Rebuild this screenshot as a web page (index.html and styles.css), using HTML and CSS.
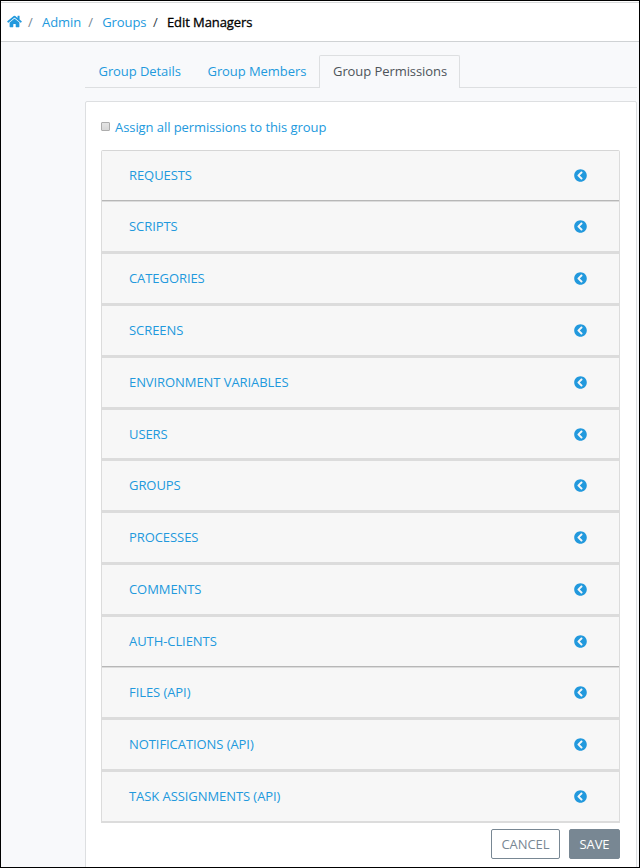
FILE: index.html
```html
<!DOCTYPE html>
<html lang="en">
<head>
<meta charset="utf-8">
<title>Edit Managers</title>
<link rel="stylesheet" href="styles.css">
</head>
<body>
<svg width="0" height="0" class="defs">
  <symbol id="chevron" viewBox="0 0 512 512"><path d="M256 504C119 504 8 393 8 256S119 8 256 8s248 111 248 248-111 248-248 248zM142 273l136 136c9 9 25 9 34 0l18-18c9-9 9-25 0-34L227 256l102-101c9-9 9-25 0-34l-18-18c-9-9-25-9-34 0L142 239c-10 9-10 25 0 34z"/></symbol>
</svg>
<div class="frame">
  <nav class="breadcrumb">
    <svg class="home" viewBox="0 0 576 512"><path d="M280 148L96 300v164a16 16 0 0 0 16 16h112a16 16 0 0 0 16-16v-96a16 16 0 0 1 16-16h64a16 16 0 0 1 16 16v96a16 16 0 0 0 16 16h112a16 16 0 0 0 16-16V300L296 148a12 12 0 0 0-16 0zm292 103l-84-69V44a12 12 0 0 0-12-12h-56a12 12 0 0 0-12 12v72l-90-74a48 48 0 0 0-61 0L4 251a12 12 0 0 0-1 17l25 31a12 12 0 0 0 17 2L280 107a12 12 0 0 1 16 0l235 194a12 12 0 0 0 17-2l25-31a12 12 0 0 0-1-17z"/></svg>
    <span class="sep first">/</span><a class="admin">Admin</a>
    <span class="sep second">/</span><a class="groups">Groups</a>
    <span class="sep third">/</span><strong>Edit Managers</strong>
  </nav>
  <main>
    <div class="tabs">
      <a class="tab details">Group Details</a>
      <a class="tab members">Group Members</a>
      <a class="tab active">Group Permissions</a>
    </div>
    <section class="card">
      <label class="assign"><span class="box"></span>Assign all permissions to this group</label>
      <div class="accordion">
        <div class="row tight dark"><span>REQUESTS</span><svg><use href="#chevron"/></svg></div>
        <div class="row"><span>SCRIPTS</span><svg><use href="#chevron"/></svg></div>
        <div class="row"><span>CATEGORIES</span><svg><use href="#chevron"/></svg></div>
        <div class="row"><span>SCREENS</span><svg><use href="#chevron"/></svg></div>
        <div class="row"><span>ENVIRONMENT VARIABLES</span><svg><use href="#chevron"/></svg></div>
        <div class="row short"><span>USERS</span><svg><use href="#chevron"/></svg></div>
        <div class="row"><span>GROUPS</span><svg><use href="#chevron"/></svg></div>
        <div class="row"><span>PROCESSES</span><svg><use href="#chevron"/></svg></div>
        <div class="row"><span>COMMENTS</span><svg><use href="#chevron"/></svg></div>
        <div class="row tight dark"><span>AUTH-CLIENTS</span><svg><use href="#chevron"/></svg></div>
        <div class="row"><span>FILES (API)</span><svg><use href="#chevron"/></svg></div>
        <div class="row"><span>NOTIFICATIONS (API)</span><svg><use href="#chevron"/></svg></div>
        <div class="row tight"><span>TASK ASSIGNMENTS (API)</span><svg><use href="#chevron"/></svg></div>
      </div>
      <div class="actions"><button class="cancel">CANCEL</button><button class="save">SAVE</button></div>
    </section>
  </main>
</div>
</body>
</html>
```
FILE: styles.css
```css
* { box-sizing: border-box; }
body { margin: 0; font: 13px/20px "Open Sans", sans-serif; letter-spacing: -.07px; color: #2299dd; }
.defs { display: block; }
svg { fill: #2299dd; flex: none; }
.frame { width: 640px; height: 868px; border: 1px solid #000; background: #f8f9fb; overflow: hidden; }

.breadcrumb { display: flex; align-items: center; height: 41px; padding: 1px 0 0 6px; margin: 0; background: #fff; border-bottom: 1px solid #cfd2d4; box-shadow: inset 0 1px #fff, inset 0 2px #d9dbdc; }
.home { width: 15px; height: 13px; }
.sep { color: #788793; }
.first { width: 14px; margin-left: 6px; }
.second { width: 14px; margin-left: 7px; }
.third { width: 14px; margin-left: 6.5px; color: #333d48; }
.breadcrumb strong { font-weight: 400; color: #000; -webkit-text-stroke: .3px #000; }

main { width: 553px; margin: 13px 0 0 84px; }
.tabs { display: flex; height: 33px; width: 552px; border-bottom: 1px solid #dddfe1; }
.tab { padding: 6px 0 0 13.5px; white-space: nowrap; }
.details { width: 109px; }
.members { width: 125px; }
.active { width: 141px; height: 33px; border: 1px solid #dddfe1; border-bottom: 0; padding: 5px 0 0 13px; background: #f8f9fb; color: #4d545a; border-radius: 2px 2px 0 0; }

.card { width: 552px; height: 780px; margin-top: 13px; padding: 15px 16px 0 15px; background: #fff; border: 1px solid #dddfe1; border-radius: 2px 2px 0 0; }
.assign { display: flex; align-items: center; height: 20px; }
.box { width: 9px; height: 9px; margin: -1px 5px 0 0; border: 1px solid #adadad; border-radius: 1px; background: linear-gradient(#e4e4e4, #d8d8d8); }
.accordion { margin-top: 13px; border: 1px solid #dcdcdc; border-top-color: #d6d6d6; border-bottom: 0; border-radius: 2px 2px 0 0; }
.row { display: flex; align-items: center; justify-content: space-between; height: 52px; padding: 0 32px 1px 27px; background: #f7f7f7; border-bottom: 3px solid #dcdcdc; }
.row svg { width: 13px; height: 13px; }
.tight { height: 51px; border-bottom-width: 2px; }
.short { height: 51px; padding-bottom: 0; }
.dark { border-bottom: 1px solid #dcdcdc; box-shadow: inset 0 -1px #b7b7b7; padding-bottom: 2px; }
.actions { display: flex; justify-content: flex-end; gap: 9px; margin-top: 6px; }
button { height: 30px; padding: 0; font: inherit; letter-spacing: -.07px; border: 1px solid #788793; border-radius: 2px; }
.cancel { width: 69px; background: #fff; color: #788793; }
.save { width: 51px; background: #788793; color: #fff; }
```
